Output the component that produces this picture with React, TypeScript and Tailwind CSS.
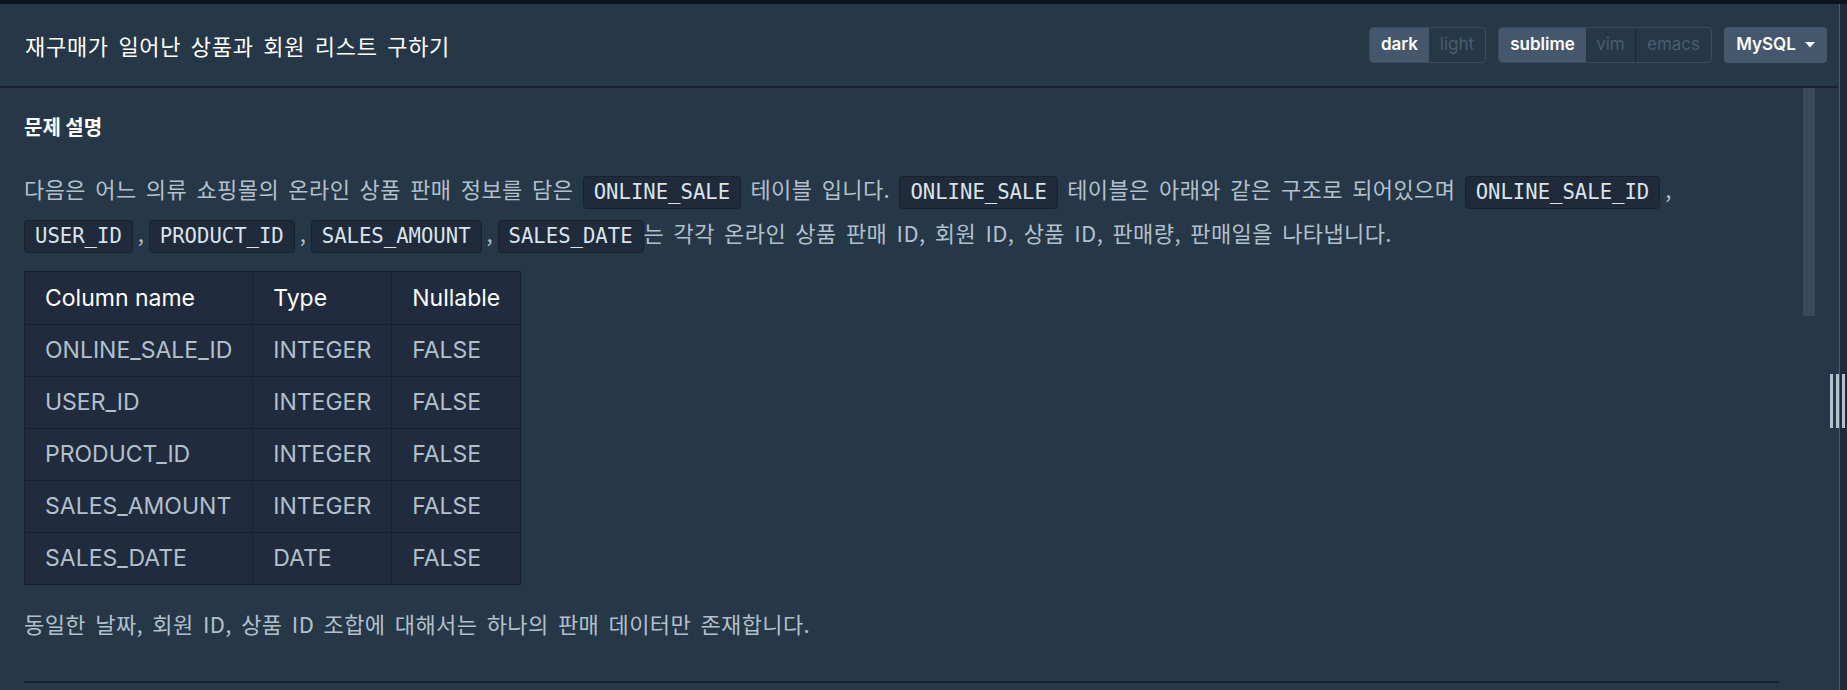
import React from 'react';

const rows = [
  ['ONLINE_SALE_ID', 'INTEGER', 'FALSE'],
  ['USER_ID', 'INTEGER', 'FALSE'],
  ['PRODUCT_ID', 'INTEGER', 'FALSE'],
  ['SALES_AMOUNT', 'INTEGER', 'FALSE'],
  ['SALES_DATE', 'DATE', 'FALSE'],
];

const Code = ({ children }: { children: React.ReactNode }) => (
  <code className="inline-block rounded-[4px] border border-[#18222f] bg-[#1f2a3b] px-[10px] py-[4px] align-middle font-['DejaVu_Sans_Mono',monospace] text-[20.6px] leading-[23px] tracking-normal text-[#dbe3ea] [word-spacing:0]">
    {children}
  </code>
);

// comma between two code spans, tighter than a word gap
const Comma = () => <span className="tracking-normal [word-spacing:0]"> , </span>;

const Seg = ({ label, active, w, sep }: { label: string; active?: boolean; w: string; sep?: boolean }) => (
  <div
    className={
      'flex h-full items-center justify-center ' +
      w +
      (active ? ' bg-[#44576c] font-semibold text-white' : ' text-[#4b5d70]') +
      (sep ? ' border-l border-[#1c2735]' : '')
    }
  >
    {label}
  </div>
);

export default function App() {
  return (
    <div className="flex h-[690px] w-[1847px] flex-col overflow-hidden bg-[#263747] font-['Noto_Sans_CJK_KR',sans-serif]">
      <div className="h-[4px] shrink-0 bg-[#0c151c]" />
      <div className="flex min-h-0 flex-1">
        <div className="flex min-w-0 flex-1 flex-col">
          {/* header */}
          <div className="flex h-[84px] shrink-0 items-center justify-between border-b-2 border-[#172130] pl-[25px] pr-[12px]">
            <h1 className="text-[22px] font-normal tracking-[0.7px] text-white [word-spacing:4px]">재구매가 일어난 상품과 회원 리스트 구하기</h1>
            <div className="flex items-center gap-3 font-['Inter',sans-serif] text-[17px]">
              <div className="flex h-[36px] overflow-hidden rounded-[4px] border border-[#3b4c5f]">
                <Seg label="dark" active w="w-[59px]" />
                <Seg label="light" w="w-[56px]" />
              </div>
              <div className="flex h-[36px] overflow-hidden rounded-[4px] border border-[#3b4c5f]">
                <Seg label="sublime" active w="w-[87px]" />
                <Seg label="vim" w="w-[49px]" />
                <Seg label="emacs" w="w-[76px]" sep />
              </div>
              <button className="flex h-[36px] w-[103px] items-center justify-center gap-[9px] rounded-[4px] bg-[#44576c] font-semibold text-white">
                MySQL
                <svg width="10" height="6" viewBox="0 0 10 6">
                  <path d="M0 0h10L5 5.5z" fill="#ffffff" />
                </svg>
              </button>
            </div>
          </div>

          {/* body */}
          <div className="flex min-h-0 flex-1">
            <div className="min-w-0 flex-1 px-6 pt-6">
              <h4 className="text-[20px] font-bold leading-[30px] text-white">문제 설명</h4>
              <p className="mt-6 text-[22px] leading-[44px] tracking-[0.4px] text-[#b2c0cc] [word-spacing:4px]">
                다음은 어느 의류 쇼핑몰의 온라인 상품 판매 정보를 담은 <Code>ONLINE_SALE</Code> 테이블 입니다.{' '}
                <Code>ONLINE_SALE</Code> 테이블은 아래와 같은 구조로 되어있으며 <Code>ONLINE_SALE_ID</Code>
                <Comma />
                <Code>USER_ID</Code>
                <Comma />
                <Code>PRODUCT_ID</Code>
                <Comma />
                <Code>SALES_AMOUNT</Code>
                <Comma />
                <Code>SALES_DATE</Code>는 각각 온라인 상품 판매 ID, 회원 ID, 상품 ID, 판매량, 판매일을 나타냅니다.
              </p>
              <table className="mt-[17px] border-collapse border border-[#172130] bg-[#202b3d] font-['Inter',sans-serif] text-[23px]">
                <thead>
                  <tr>
                    <th className="h-[53px] border border-[#172130] px-5 text-left font-normal text-white">Column name</th>
                    <th className="h-[53px] border border-[#172130] px-5 text-left font-normal text-white">Type</th>
                    <th className="h-[53px] border border-[#172130] px-5 text-left font-normal text-white">Nullable</th>
                  </tr>
                </thead>
                <tbody>
                  {rows.map((r) => (
                    <tr key={r[0]}>
                      {r.map((c, i) => (
                        <td key={i} className="h-[52px] border border-[#172130] px-5 text-[#b2c0cc]">
                          {c}
                        </td>
                      ))}
                    </tr>
                  ))}
                </tbody>
              </table>
              <p className="mt-[16px] text-[22px] leading-[44px] tracking-[0.4px] text-[#b2c0cc] [word-spacing:4px]">
                동일한 날짜, 회원 ID, 상품 ID 조합에 대해서는 하나의 판매 데이터만 존재합니다.
              </p>
              <hr className="mt-[36px] border-t-2 border-[#172130]" />
            </div>
            <div className="w-[12px] shrink-0">
              <div className="h-[228px] bg-[#38495d]" />
            </div>
            <div className="w-[24px] shrink-0" />
          </div>
        </div>
        <div className="relative w-px shrink-0 bg-[#4d5b69]">
          <div className="absolute left-[-9px] top-[370px] flex h-[54px] gap-[3px]">
            <div className="w-[3px] bg-[#b3c3cb]" />
            <div className="w-[3px] bg-[#b3c3cb]" />
            <div className="w-[3px] bg-[#b3c3cb]" />
          </div>
        </div>
        <div className="w-[7px] shrink-0 bg-[#1f2b38]" />
      </div>
    </div>
  );
}
